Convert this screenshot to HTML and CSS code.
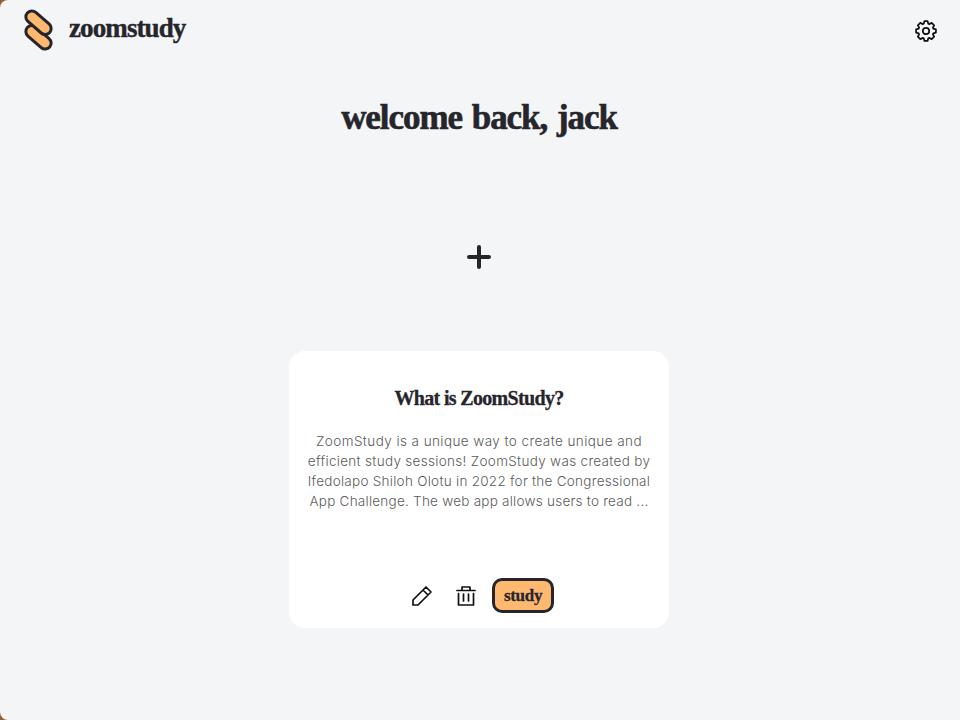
FILE: index.html
```html
<!DOCTYPE html>
<html lang="en">
<head>
<meta charset="utf-8">
<title>zoomstudy</title>
<link rel="stylesheet" href="styles.css">
</head>
<body>
<div class="app">
  <header class="header">
    <div class="brand">
      <svg class="logo" viewBox="0 0 30 42" fill="#ffb870" stroke="#27252c" stroke-width="3">
        <rect x="-14.800" y="-6" width="29.600" height="12" rx="6" transform="translate(15.500 28.300) rotate(41)"/>
        <rect x="-14.800" y="-6" width="29.600" height="12" rx="6" transform="translate(15.500 13.700) rotate(41)"/>
      </svg>
      <span class="brand-name">zoomstudy</span>
    </div>
    <svg class="icon gear" viewBox="0 0 24 24">
      <path d="M9.500 4 10.300 1.200h3.400L14.500 4l1.200.5 2.500-1.400 2.700 2.700-1.400 2.500.5 1.200 2.800.8v3.400l-2.800.8-.5 1.200 1.400 2.500-2.700 2.700-2.500-1.400-1.200.5-.8 2.800h-3.400L9.500 20l-1.200-.5-2.500 1.400-2.700-2.700 1.400-2.500L4 14.500l-2.800-.8v-3.400L4 9.500l.5-1.200-1.400-2.500 2.700-2.700 2.500 1.400z"/>
      <circle cx="12" cy="12" r="3.500"/>
    </svg>
  </header>
  <main class="main">
    <h1 class="welcome">welcome back, jack</h1>
    <svg class="plus" viewBox="0 0 24 24"><path d="M12 2v20M2 12h20"/></svg>
    <article class="card">
      <h2 class="card-title">What is ZoomStudy?</h2>
      <p class="card-text">
        <span class="line line-a">ZoomStudy is a unique way to create unique and</span>
        <span class="line line-b">efficient study sessions! ZoomStudy was created by</span>
        <span class="line line-c">Ifedolapo Shiloh Olotu in 2022 for the Congressional</span>
        <span class="line line-d">App Challenge. The web app allows users to read ...</span>
      </p>
      <div class="actions">
        <svg class="icon" viewBox="0 0 24 24"><path d="M3 21v-5L16 3l5 5L8 21zM13 6l5 5"/></svg>
        <svg class="icon" viewBox="0 0 24 24"><path d="M3 6.500h18M8 6V3h8v3M4.500 9.500V21h15V9.500M9.500 10v7M14.500 10v7"/></svg>
        <button class="study">study</button>
      </div>
    </article>
  </main>
</div>
</body>
</html>
```

FILE: styles.css
```css
body {
  margin: 0;
  background: #9c5938;
  color: #27252c;
}
.app {
  box-sizing: border-box;
  height: 720px;
  border-radius: 8px 0 0 8px;
  background: #f3f5f7;
  overflow: hidden;
}
.header {
  display: flex;
  justify-content: space-between;
  align-items: center;
  height: 60px;
  padding: 0 23px;
}
.brand {
  display: flex;
  align-items: center;
  gap: 16px;
}
.logo {
  width: 30px;
  height: 42px;
}
.brand-name {
  font: bold 27px/32px "Liberation Serif", serif;
  letter-spacing: -0.9px;
  -webkit-text-stroke: 0.4px #27252c;
  margin-top: -4px;
}
.icon {
  width: 24px;
  height: 24px;
  fill: none;
  stroke: #111;
  stroke-width: 1.7;
  stroke-linejoin: round;
  stroke-linecap: round;
}
.gear {
  width: 22px;
  height: 22px;
  margin-top: 2px;
  stroke-width: 1.9;
}
.main {
  display: flex;
  flex-direction: column;
  align-items: center;
  width: 958px;
}
.welcome {
  margin: 36px 0 0;
  font: bold 35px/44px "Liberation Serif", serif;
  letter-spacing: -1.05px;
  word-spacing: 2px;
  -webkit-text-stroke: 0.6px #27252c;
}
.plus {
  width: 24px;
  height: 24px;
  margin-top: 105px;
  fill: none;
  stroke: #27252c;
  stroke-width: 4;
  stroke-linecap: round;
}
.card {
  box-sizing: border-box;
  display: flex;
  flex-direction: column;
  align-items: center;
  width: 380px;
  height: 277px;
  margin-top: 82px;
  padding-top: 34px;
  border-radius: 16px;
  background: #fff;
}
.card-title {
  margin: 0;
  font: bold 20px/26px "Liberation Serif", serif;
  letter-spacing: -0.67px;
  -webkit-text-stroke: 0.3px #27252c;
}
.card-text {
  margin: 20px 0 0;
  font: 300 13.5px/20px Inter, sans-serif;
  color: #5c5c5c;
  text-align: center;
}
.line {
  display: block;
  white-space: nowrap;
}
.line-a {
  letter-spacing: 0.42px;
}
.line-b {
  letter-spacing: 0.31px;
}
.line-c {
  letter-spacing: 0.27px;
}
.line-d {
  letter-spacing: 0.24px;
}
.actions {
  display: flex;
  align-items: center;
  gap: 20px;
  margin-top: 67px;
  margin-left: 6px;
}
.study {
  box-sizing: border-box;
  width: 62px;
  height: 35px;
  margin-left: -6px;
  padding: 0;
  border: 3px solid #27252c;
  border-radius: 10px;
  background: #ffb870;
  color: #27252c;
  font: bold 17px/26px "Liberation Serif", serif;
  letter-spacing: -0.3px;
  -webkit-text-stroke: 0.3px #27252c;
}
```
